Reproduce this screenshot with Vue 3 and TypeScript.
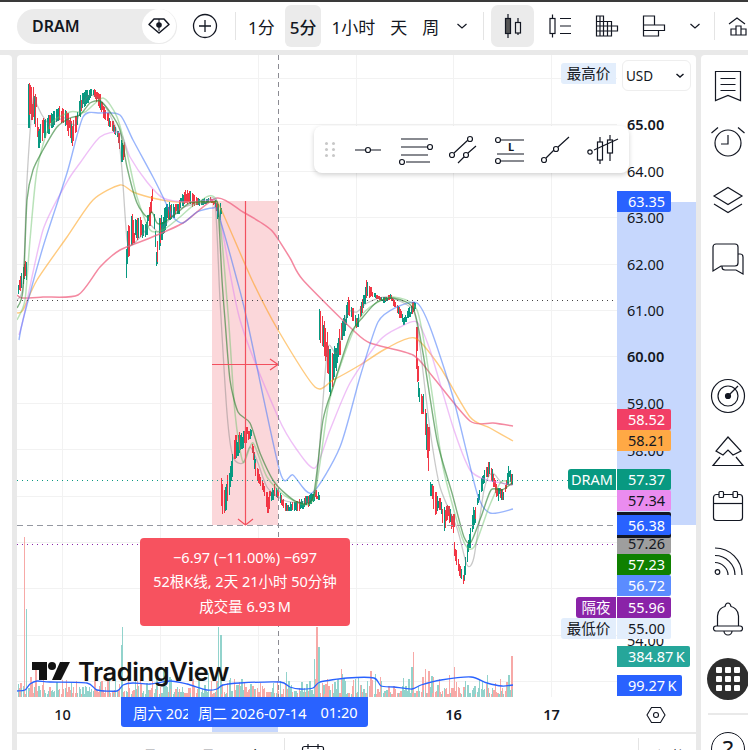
<script setup lang="ts">
type Pt = [number, number]

// page coordinates, read off the reference: [x, high, low]
const envelope: [number, number, number][] = [
  [17, 285, 300], [20, 275, 292], [23, 263, 287], [25, 258, 280], [26, 73, 133], [30, 85, 125], [32, 82, 123], [35, 93, 128],
  [38, 127, 148], [43, 118, 140], [50, 113, 132], [58, 105, 123], [65, 108, 128], [72, 120, 147], [77, 112, 128],
  [80, 95, 118], [85, 90, 105], [93, 88, 97], [98, 92, 108], [103, 103, 120], [110, 117, 130], [117, 130, 138],
  [121, 140, 162], [124, 243, 287], [125, 270, 297], [127, 227, 267], [132, 213, 247], [140, 217, 237], [145, 223, 240],
  [150, 200, 225], [152, 188, 203], [155, 225, 250], [156, 247, 273], [159, 217, 253], [167, 200, 223], [177, 203, 217],
  [185, 188, 203], [192, 192, 208], [197, 198, 207], [210, 197, 203], [215, 200, 208], [217, 203, 222],
  [220, 458, 497], [223, 493, 527], [227, 470, 505], [230, 463, 490], [235, 433, 460], [243, 427, 450], [250, 427, 440],
  [255, 460, 477], [263, 483, 493], [267, 493, 513], [275, 483, 497], [285, 503, 512], [297, 500, 512], [310, 493, 507],
  [315, 490, 500], [318, 296, 340], [323, 317, 350], [328, 335, 385], [330, 353, 400], [335, 343, 377], [340, 323, 350],
  [348, 297, 317], [357, 317, 330], [363, 293, 313], [366, 280, 300], [373, 292, 297], [382, 297, 303], [390, 293, 300],
  [400, 307, 320], [403, 317, 327], [408, 308, 318], [414, 298, 312], [416, 327, 370], [418, 380, 397], [420, 393, 415],
  [423, 393, 413], [428, 427, 477], [430, 480, 497], [435, 490, 517], [440, 497, 510], [443, 507, 535], [448, 500, 520],
  [453, 513, 540], [454, 540, 557], [457, 557, 570], [460, 563, 580], [463, 572, 588], [465, 553, 573], [469, 533, 553],
  [473, 507, 533], [477, 497, 507], [481, 477, 493], [486, 463, 480], [490, 460, 477], [496, 483, 500], [499, 487, 503],
  [504, 490, 500], [508, 465, 480], [511, 468, 488], [513, 477, 485]
]

const spikes: Record<number, number> = {
  24: 160, 26: 88, 27: 60, 122: 70, 121: 52, 218: 70, 220: 62, 223: 42, 316: 70, 318: 50, 314: 38, 415: 59, 413: 45, 411: 30,
  511: 41, 454: 30, 425: 28, 428: 26, 449: 22, 341: 28, 345: 20, 256: 20, 35: 28, 32: 22
}

let seed = 4711
const rnd = () => {
  seed = (seed * 16807) % 2147483647
  return seed / 2147483647
}

function envAt(x: number): [number, number] {
  for (let i = 1; i < envelope.length; i++) {
    const a = envelope[i - 1]
    const b = envelope[i]
    if (x <= b[0]) {
      // a session gap: hold the level, no long candle across it
      if (Math.abs(b[1] - a[1]) > 60) return [a[1], a[2]]
      const t = (x - a[0]) / (b[0] - a[0])
      return [a[1] + (b[1] - a[1]) * t, a[2] + (b[2] - a[2]) * t]
    }
  }
  const last = envelope[envelope.length - 1]
  return [last[1], last[2]]
}

const candles: { x: number; hi: number; lo: number; top: number; h: number; w: number; up: boolean; vol: number }[] = []
for (let i = 0; i < 390; i++) {
  const x = Math.round(17.5 + i * 1.272)
  const [hi, lo] = envAt(x)
  const span = lo - hi
  const bodyH = Math.max(2, span * (0.25 + rnd() * 0.35))
  const top = hi + rnd() * (span - bodyH)
  const vol = spikes[x] ?? (x < 24 ? 6 + rnd() * 10 : 3 + rnd() * rnd() * 26)
  const rising = envAt(x + 3)[0] < hi
  candles.push({
    x,
    hi: hi + rnd() * span * 0.3 * (top - hi > 0 ? 1 : 0),
    lo: lo - rnd() * span * 0.3,
    top,
    h: bodyH,
    w: rnd() > 0.6 ? 2 : 1,
    up: rnd() < (rising ? 0.72 : 0.3),
    vol
  })
}

function smooth(p: Pt[]): string {
  let d = `M${p[0][0]} ${p[0][1]}`
  for (let i = 0; i < p.length - 1; i++) {
    const p0 = p[Math.max(i - 1, 0)]
    const p1 = p[i]
    const p2 = p[i + 1]
    const p3 = p[Math.min(i + 2, p.length - 1)]
    const k = 8
    d += `C${(p1[0] + (p2[0] - p0[0]) / k).toFixed(1)} ${(p1[1] + (p2[1] - p0[1]) / k).toFixed(1)} ${(p2[0] - (p3[0] - p1[0]) / k).toFixed(1)} ${(p2[1] - (p3[1] - p1[1]) / k).toFixed(1)} ${p2[0]} ${p2[1]}`
  }
  return d
}

const maLines: { color: string; w: number; pts: Pt[] }[] = [
  { color: 'rgba(255,152,0,.5)', w: 1.4, pts: [[17,313],[23,310],[37,280],[67,237],[93,200],[120,185],[133,192],[157,199],[177,202],[213,202],[220,207],[252,280],[278,330],[315,387],[333,380],[360,365],[387,348],[415,338],[440,367],[470,417],[490,428],[513,441]] },
  { color: 'rgba(240,98,130,.75)', w: 1.5, pts: [[17,295],[22,298],[43,297],[78,295],[100,267],[120,250],[150,238],[183,223],[217,198],[243,212],[260,222],[273,232],[290,258],[303,280],[353,330],[370,343],[413,355],[433,377],[470,421],[493,423],[513,426]] },
  { color: 'rgba(224,130,240,.5)', w: 1.4, pts: [[19,335],[23,320],[43,230],[67,182],[80,163],[100,137],[120,133],[130,157],[147,182],[163,198],[187,202],[213,200],[218,207],[240,320],[278,417],[297,450],[315,468],[330,430],[350,383],[380,340],[400,327],[417,322],[430,350],[453,427],[470,470],[487,480],[513,485]] },
  { color: 'rgba(70,120,250,.55)', w: 1.4, pts: [[19,340],[23,320],[43,247],[67,173],[83,117],[100,113],[120,115],[133,140],[153,177],[163,197],[173,217],[183,223],[197,212],[213,208],[218,213],[237,280],[247,320],[280,472],[293,475],[312,493],[340,447],[360,377],[378,322],[397,307],[417,303],[430,327],[453,397],[477,493],[490,513],[513,509]] },
  { color: 'rgba(120,120,120,.4)', w: 1.3, pts: [[17,300],[23,285],[27,180],[33,100],[37,105],[42,115],[50,125],[55,122],[65,118],[75,125],[82,105],[90,95],[100,100],[110,115],[118,135],[122,170],[127,240],[132,245],[142,235],[150,225],[158,232],[165,225],[178,210],[190,205],[205,203],[215,203],[220,300],[227,413],[233,457],[243,463],[250,447],[258,463],[267,487],[283,500],[300,502],[315,493],[322,413],[328,347],[337,353],[347,313],[357,312],[367,303],[387,297],[413,310],[420,347],[430,430],[440,487],[457,528],[467,565],[474,557],[484,490],[492,473],[502,483],[512,485]] },
  { color: 'rgba(100,190,100,.45)', w: 1.5, pts: [[17,320],[25,300],[30,240],[37,170],[50,125],[70,112],[85,112],[103,98],[117,117],[127,153],[137,197],[150,230],[163,230],[180,217],[197,203],[217,202],[228,313],[235,413],[243,462],[253,443],[267,477],[287,497],[313,500],[328,407],[340,367],[357,323],[370,307],[393,297],[417,310],[430,380],[443,467],[463,540],[474,547],[489,507],[501,482],[512,482]] },
  { color: 'rgba(40,125,45,.6)', w: 1.4, pts: [[17,308],[23,290],[27,200],[33,170],[43,150],[57,127],[70,118],[80,115],[90,103],[100,101],[110,112],[120,130],[127,167],[137,203],[147,217],[152,212],[157,223],[163,223],[177,213],[190,203],[213,202],[218,207],[222,280],[225,320],[230,380],[238,412],[250,423],[260,453],[275,483],[297,502],[313,497],[323,420],[333,387],[350,335],[363,317],[377,302],[393,298],[413,308],[423,353],[437,440],[452,493],[464,537],[471,542],[481,517],[491,490],[502,490],[512,483]] }
]

const volMa: Pt[] = [[17,691],[25,690],[30,684],[37,681],[50,682],[87,683],[97,690],[117,691],[123,685],[133,683],[150,684],[170,681],[187,684],[207,690],[217,689],[223,685],[240,683],[280,682],[290,687],[300,689],[313,688],[320,682],[347,678],[374,678],[381,686],[394,687],[412,689],[421,685],[441,680],[471,677],[487,683],[502,686],[513,685]]

const gridY = Array.from({ length: 14 }, (_, i) => Math.round(78 + i * 46.4))
const gridX = [62.5, 160.5, 258.5, 356.5, 453.5, 551.5]

const ticks = [
  { y: 124, t: '65.00', bold: true }, { y: 171, t: '64.00' }, { y: 217, t: '63.00' }, { y: 264, t: '62.00' },
  { y: 310, t: '61.00' }, { y: 356, t: '60.00', bold: true }, { y: 403, t: '59.00' }, { y: 450, t: '58.00' },
  { y: 640, t: '54.00' }
]

const priceTags = [
  { top: 191, h: 21, t: '63.35', bg: '#2962ff', fg: '#fff', w: 54 },
  { top: 409, h: 21, t: '58.52', bg: '#f23f66', fg: '#fff', w: 54 },
  { top: 430, h: 21, t: '58.21', bg: '#ffa945', fg: '#131722', w: 54 },
  { top: 469, h: 21, t: '57.37', bg: '#089981', fg: '#fff', w: 54 },
  { top: 490, h: 21, t: '57.34', bg: '#ea8cef', fg: '#131722', w: 54 },
  { top: 533, h: 21, t: '57.26', bg: '#9e9e9e', fg: '#131722', w: 54 },
  { top: 512, h: 26, t: '', bg: '#131722', fg: '#fff', w: 54 },
  { top: 515, h: 20, t: '56.38', bg: '#2962ff', fg: '#fff', w: 54 },
  { top: 554, h: 21, t: '57.23', bg: '#0f8000', fg: '#fff', w: 54 },
  { top: 575, h: 21, t: '56.72', bg: '#5b8cff', fg: '#fff', w: 54 },
  { top: 597, h: 21, t: '55.96', bg: '#8a23a8', fg: '#fff', w: 54 },
  { top: 618, h: 21, t: '55.00', bg: '#e3eefc', fg: '#131722', w: 54 },
  { top: 646, h: 21, t: '384.87\u2009K', bg: '#26a69a', fg: '#fff', w: 73 },
  { top: 675, h: 21, t: '99.27\u2009K', bg: '#2962ff', fg: '#fff', w: 65 }
]

const nameTags = [
  { top: 469, w: 48, t: 'DRAM', bg: '#089981', fg: '#fff' },
  { top: 597, w: 40, t: '隔夜', bg: '#8a23a8', fg: '#fff' },
  { top: 618, w: 55, t: '最低价', bg: '#e3eefc', fg: '#131722' },
  { top: 63, w: 55, t: '最高价', bg: '#e3eefc', fg: '#131722' }
]
</script>

<template>
  <div class="app">
    <div class="topline"></div>
    <header class="header">
      <div class="symbol">
        <span class="symbol-name">DRAM</span>
        <span class="symbol-gem">
          <svg width="24" height="20" viewBox="0 0 24 20" fill="none" stroke="#131722" stroke-width="1.5">
            <path d="M7 3h10l5 5.5L12 17 2 8.500z" stroke-linejoin="round" />
            <circle cx="12" cy="9" r="2.800" fill="#131722" stroke="none" />
            <path d="M12 3v12" stroke-width="1" />
          </svg>
        </span>
      </div>
      <svg class="plus" width="36" height="36" viewBox="0 0 36 36" fill="none" stroke="#131722" stroke-width="1.300">
        <circle cx="18" cy="18" r="11.500" />
        <path d="M18 12v12M12 18h12" />
      </svg>
      <span class="sep first"></span>
      <div class="intervals">
        <button class="itv">1分</button>
        <button class="itv on">5分</button>
        <button class="itv">1小时</button>
        <button class="itv">天</button>
        <button class="itv">周</button>
        <svg class="chev" width="26" height="20" viewBox="0 0 26 20" fill="none" stroke="#131722" stroke-width="1.200">
          <path d="M8.500 8l4.500 4 4.500-4" />
        </svg>
      </div>
      <span class="sep second"></span>
      <div class="styles">
        <span class="sty on">
          <svg width="28" height="28" viewBox="0 0 28 28" fill="none" stroke="#131722" stroke-width="1.200">
            <path d="M9 2v24M19 6v17" />
            <rect x="6.500" y="6.500" width="5" height="15" fill="#555" />
            <rect x="16.500" y="10.500" width="5" height="10.500" fill="#ebebeb" />
          </svg>
        </span>
        <span class="sty">
          <svg width="28" height="28" viewBox="0 0 28 28" fill="none" stroke="#131722" stroke-width="1.200">
            <path d="M6.500 2.500v23M14 6.500h11M14 14h11M14 21.500h11" />
            <rect x="4" y="6.500" width="5" height="15" fill="#fff" />
          </svg>
        </span>
        <span class="sty">
          <svg width="28" height="28" viewBox="0 0 28 28" fill="none" stroke="#131722" stroke-width="1.200">
            <path d="M3.500 4h7v5.500h8V14h6v5h-6v5h-15zM3.500 9.500h15M3.500 14h15M3.500 19h15M7 4v20M10.500 4v20M14.500 9.500V24M18.500 9.500V24" />
          </svg>
        </span>
        <span class="sty">
          <svg width="28" height="28" viewBox="0 0 28 28" fill="none" stroke="#131722" stroke-width="1.200">
            <path d="M3.500 4h11v9h10v5.500h-6V24h-15zM3.500 13h11M3.500 18.500h15" />
          </svg>
        </span>
        <svg class="chev style-chev" width="24" height="20" viewBox="0 0 24 20" fill="none" stroke="#131722" stroke-width="1.200">
          <path d="M7.500 8l4.500 4 4.500-4" />
        </svg>
      </div>
      <span class="sep third"></span>
      <svg class="cut-icon" width="28" height="28" viewBox="0 0 28 28" fill="none" stroke="#131722" stroke-width="1.200">
        <path d="M2 12l8-6 8 6M4 23v-6h5v6zM9 23v-9h5v9zM14 23v-6h5v6z" />
      </svg>
    </header>

    <div class="body">
      <div class="left-rail"></div>

      <main class="main">
        <div class="chart">
          <svg class="canvas" width="679" height="642" viewBox="17 55 679 642">
            <path v-for="y in gridY" :key="'gy' + y" :d="`M17 ${y + 0.5}H617`" stroke="#f2f2f2" />
            <path v-for="x in gridX" :key="'gx' + x" :d="`M${x} 55V697`" stroke="#f2f2f2" />

            <rect x="212" y="201" width="66" height="324" fill="#fbd7da" />
            <rect x="617" y="202" width="79" height="323" fill="#c6d7fd" />

            <g shape-rendering="crispEdges">
              <rect v-for="(c, i) in candles" :key="'v' + i" :x="c.x" :y="697 - c.vol" :width="c.w" :height="c.vol"
                :fill="c.up ? '#92d3cc' : '#f7a9a7'" />
            </g>
            <path :d="smooth(volMa)" fill="none" stroke="#2962ff" stroke-width="1.300" />

            <g shape-rendering="crispEdges">
              <g v-for="(c, i) in candles" :key="'c' + i" :fill="c.up ? '#089981' : '#f23645'">
                <rect :x="c.x" :y="c.hi" width="1" :height="c.lo - c.hi" />
                <rect :x="c.x" :y="c.top" :width="c.w" :height="c.h" />
              </g>
            </g>

            <path v-for="(m, i) in maLines" :key="'ma' + i" :d="smooth(m.pts)" fill="none" :stroke="m.color" :stroke-width="m.w" />

            <path d="M17 300.500H617" stroke="#444" stroke-dasharray="1 4" />
            <path d="M17 480.500H568" stroke="#089981" stroke-dasharray="1 4" />
            <path d="M17 544.500H617" stroke="#8a23a8" stroke-dasharray="1 4" />

            <g fill="none" stroke="#f2505e" stroke-width="1.200">
              <path d="M245.500 201V525M212 364.500H278M270 359l8 5.500-8 5.500M238 519l7.500 6 7.500-6" />
            </g>

            <path d="M17 525.500H617" stroke="#9598a1" stroke-dasharray="6 4" />
            <path d="M278.500 55V697" stroke="#8b8b92" stroke-dasharray="5 4" />
          </svg>

          <span v-for="t in ticks" :key="t.t" class="tick" :class="{ bold: t.bold }" :style="{ top: t.y - 65 + 'px' }">{{ t.t }}</span>

          <span v-for="p in priceTags" :key="p.top" class="price-tag"
            :style="{ top: p.top - 55 + 'px', height: p.h + 'px', lineHeight: p.h + 'px', width: p.w + 'px', background: p.bg, color: p.fg }">{{ p.t }}</span>

          <span v-for="n in nameTags" :key="n.t" class="name-tag"
            :style="{ top: n.top - 55 + 'px', width: n.w + 'px', background: n.bg, color: n.fg }">{{ n.t }}</span>

          <div class="currency">
            <span>USD</span>
            <svg width="10" height="8" viewBox="0 0 10 8" fill="none" stroke="#131722" stroke-width="1.500">
              <path d="M1.500 2l3.500 3 3.500-3" />
            </svg>
          </div>

          <div class="drawbar">
            <span class="grip"><i v-for="n in 6" :key="n"></i></span>
            <svg width="32" height="32" viewBox="0 0 32 32" fill="none" stroke="#131722" stroke-width="1.200">
              <path d="M3 16h10.500M18.500 16H29" />
              <circle cx="16" cy="16" r="2.500" />
            </svg>
            <svg width="36" height="32" viewBox="0 0 36 32" fill="none" stroke="#131722" stroke-width="1.200">
              <path d="M3 5h27M3 13h26M3 21h27M8 28h24" />
              <circle cx="32" cy="13" r="2.500" fill="#fff" />
              <circle cx="4" cy="28" r="2.500" fill="#fff" />
            </svg>
            <svg width="32" height="32" viewBox="0 0 32 32" fill="none" stroke="#131722" stroke-width="1.200">
              <path d="M6 19L20 6M10 29l6-6M20 19l8-7" />
              <circle cx="4" cy="21" r="2.500" fill="#fff" />
              <circle cx="22" cy="5" r="2.500" fill="#fff" />
              <circle cx="18" cy="21" r="2.500" fill="#fff" />
            </svg>
            <svg width="32" height="32" viewBox="0 0 32 32" fill="none" stroke="#131722" stroke-width="1.200">
              <path d="M6 6h24M3 20h27M6 27h24" />
              <circle cx="4" cy="6" r="2.500" fill="#fff" />
              <circle cx="4" cy="27" r="2.500" fill="#fff" />
              <text x="14" y="17" class="mini-l">L</text>
            </svg>
            <svg width="32" height="32" viewBox="0 0 32 32" fill="none" stroke="#131722" stroke-width="1.200">
              <path d="M6 24l8-8M18 13L29 3" />
              <circle cx="4" cy="26" r="2.500" fill="#fff" />
              <circle cx="16" cy="15" r="2.500" fill="#fff" />
            </svg>
            <svg width="34" height="32" viewBox="0 0 34 32" fill="none" stroke="#131722" stroke-width="1.200">
              <path d="M14 3v27M24 1v26" />
              <rect x="11.500" y="8" width="5" height="18" fill="#fff" />
              <rect x="21.500" y="6" width="5" height="13" fill="#fff" />
              <path d="M8 16L32 5" />
              <circle cx="4" cy="18" r="2.200" fill="#fff" />
            </svg>
          </div>

          <div class="measure">
            <div>−6.97 (−11.00%) −697</div>
            <div>52根K线, 2天 21小时 50分钟</div>
            <div>成交量 6.93&#8201;M</div>
          </div>

          <div class="watermark">
            <svg width="38" height="20" viewBox="0 0 38 20" fill="#131313">
              <path d="M15 1H0v8h7v10h8zM29 19h-9L28 1h10z" />
              <circle cx="20" cy="5" r="4" />
            </svg>
            <span>TradingView</span>
          </div>
        </div>

        <div class="timeaxis">
          <span class="day" style="left: 28.500px">10</span>
          <span class="day bold" style="left: 419.500px">16</span>
          <span class="day bold" style="left: 517.500px">17</span>
          <div class="cross-time">
            <span class="old">周六 202</span>
            <span class="date">周二 2026-07-14</span>
            <span class="hour">01:20</span>
          </div>
          <svg class="gear" width="22" height="22" viewBox="0 0 22 22" fill="none" stroke="#131722" stroke-width="1.100">
            <path d="M6.500 3.500h9L20 11l-4.500 7.500h-9L2 11z" />
            <circle cx="11" cy="11" r="2.500" />
          </svg>
        </div>

        <footer class="footer">
          <div class="ranges">
            <span>1日</span><span>5日</span><span>1月</span><span class="wide">3月</span><span class="wider">1年</span>
          </div>
          <span class="foot-sep sep-a"></span>
          <svg class="foot-cal" width="24" height="24" viewBox="0 0 24 24" fill="none" stroke="#131722" stroke-width="1.200">
            <rect x="1.500" y="3.500" width="21" height="18" rx="2" />
            <path d="M7 1v5M17 1v5" />
          </svg>
          <span class="clock">00:55:25 UTC+8&nbsp;&nbsp;57%</span>
          <span class="foot-sep sep-b"></span>
          <span class="adj">调整</span>
        </footer>
      </main>

      <aside class="side">
        <svg class="ic" viewBox="0 0 36 36" fill="none" stroke="#131722" stroke-width="1.200">
          <path d="M5.500 3.500h25v29L18 27.500 5.500 32.500zM10.500 10.500h15M10.500 16.500h15M10.500 22.500h15" />
        </svg>
        <svg class="ic" viewBox="0 0 36 36" fill="none" stroke="#131722" stroke-width="1.200">
          <circle cx="18" cy="18" r="13" />
          <path d="M18 10v9h-7M1.500 8L8 2.500M34.500 8L28 2.500" />
        </svg>
        <svg class="ic" viewBox="0 0 36 36" fill="none" stroke="#131722" stroke-width="1.200">
          <path d="M4 14L18 5.500 32 14 18 22.500zM4 22l14 8.500L32 22" />
        </svg>
        <svg class="ic chat" viewBox="0 0 36 36" fill="none" stroke="#131722" stroke-width="1.200">
          <path d="M6 3h19a3 3 0 0 1 3 3v16a3 3 0 0 1-3 3H11l-8 5V6a3 3 0 0 1 3-3z" />
          <path d="M28 13h2a3 3 0 0 1 3 3v17l-7-4H15a3 3 0 0 1-3-3v-1" />
        </svg>

        <svg class="ic low target" viewBox="0 0 36 36" fill="none" stroke="#131722" stroke-width="1.200">
          <circle cx="18" cy="18" r="16.500" />
          <circle cx="18" cy="18" r="10" />
          <circle cx="18" cy="18" r="2.500" fill="#131722" />
          <path d="M18 18L28 8" />
        </svg>
        <svg class="ic low" viewBox="0 0 36 36" fill="none" stroke="#131722" stroke-width="1.200">
          <path d="M18 4l13 14-8 4-5-5-5 5-7-4zM10 24L3 32.500h30L26 24" />
        </svg>
        <svg class="ic low" viewBox="0 0 36 36" fill="none" stroke="#131722" stroke-width="1.200">
          <rect x="3.500" y="6.500" width="29" height="26" rx="3" />
          <path d="M3.500 15.500h29" />
          <rect x="9" y="3.500" width="4.500" height="6" rx="1" fill="#fff" />
          <rect x="23" y="3.500" width="4.500" height="6" rx="1" fill="#fff" />
        </svg>
        <svg class="ic low rss" viewBox="0 0 36 36" fill="none" stroke="#131722" stroke-width="1.200">
          <path d="M5 5c15 0 27 12 27 27M5 12.500c11 0 20 9 20 19.500M5 19.500c7 0 13 6 13 12.500" />
          <circle cx="7.500" cy="29" r="2.300" />
        </svg>
        <svg class="ic low bell" viewBox="0 0 36 36" fill="none" stroke="#131722" stroke-width="1.200">
          <path d="M7.500 25V15c0-6 5-9 7.500-9.500C15.500 3 17 2 18 2s2.500 1 3 3.500C23.500 6 28.500 9 28.500 15v10" />
          <rect x="3.500" y="25" width="29" height="5" rx="2.500" />
          <path d="M14 30a4 4 0 0 0 8 0" />
        </svg>

        <div class="apps">
          <i v-for="n in 9" :key="n"></i>
        </div>
        <span class="side-sep"></span>
        <div class="help">?</div>
      </aside>
    </div>
  </div>
</template>

<style scoped>
.app {
  width: 748px;
  height: 750px;
  overflow: hidden;
  background: #e9e9e9;
  font-family: "Noto Sans", "Noto Sans CJK SC", sans-serif;
  color: #131722;
}

.topline {
  height: 2px;
  background: #3a3a3a;
}

.header {
  display: flex;
  align-items: center;
  height: 48px;
  background: #fff;
  padding-left: 17px;
  overflow: hidden;
}

.symbol {
  flex: none;
  display: flex;
  align-items: center;
  justify-content: space-between;
  width: 160px;
  height: 35px;
  box-sizing: border-box;
  padding-left: 15px;
  border-radius: 18px;
  background: #ebebeb;
}

.symbol-name {
  font-size: 16px;
  font-weight: 600;
}

.symbol-gem {
  display: flex;
  align-items: center;
  justify-content: center;
  width: 34px;
  height: 34px;
  margin-right: 1px;
  border-radius: 50%;
  background: #fff;
}

.plus {
  flex: none;
  margin-left: 10px;
}

.sep {
  flex: none;
  width: 1px;
  height: 28px;
  background: #e4e4e4;
}

.sep.first {
  margin: 0 7px 0 12px;
}

.sep.second {
  margin: 0 7px 0 8px;
}

.sep.third {
  margin: 0 5px 0 7px;
}

.intervals,
.styles {
  flex: none;
  display: flex;
  align-items: center;
}

.intervals {
  gap: 5px;
}

.styles {
  gap: 4px;
}

.style-chev {
  margin-left: 4px;
}

.itv {
  height: 42px;
  padding: 0 5px;
  border: 0;
  border-radius: 6px;
  background: none;
  font: inherit;
  font-size: 17px;
  color: inherit;
}

.itv.on {
  background: #ebebeb;
  font-weight: 500;
}

.sty {
  display: flex;
  align-items: center;
  justify-content: center;
  width: 43px;
  height: 42px;
  border-radius: 7px;
}

.sty.on {
  background: #ebebeb;
}

.cut-icon {
  flex: none;
  margin-left: 7px;
}

.body {
  display: flex;
  gap: 5px;
  margin-top: 5px;
}

.left-rail {
  flex: none;
  width: 12px;
  height: 695px;
  border-radius: 0 4px 0 0;
  background: #fff;
}

.main {
  flex: none;
  width: 679px;
  height: 695px;
  border-radius: 4px 4px 0 0;
  background: #fff;
  overflow: hidden;
}

.chart {
  position: relative;
  height: 642px;
}

.canvas {
  position: absolute;
  left: 0;
  top: 0;
  display: block;
}

.mini-l {
  font-family: "Noto Sans", sans-serif;
  font-size: 11px;
  font-weight: 700;
  fill: #131722;
  stroke: none;
}

.tick {
  position: absolute;
  left: 610px;
  height: 20px;
  font-size: 14.500px;
  line-height: 20px;
}

.tick.bold {
  font-weight: 600;
}

.price-tag {
  position: absolute;
  left: 600px;
  box-sizing: border-box;
  padding-left: 11px;
  border-radius: 0 2px 2px 0;
  font-size: 14.500px;
  white-space: nowrap;
}

.name-tag {
  position: absolute;
  left: 544px;
  right: auto;
  height: 21px;
  transform: translateX(calc(55px - 100%));
  box-sizing: border-box;
  border-radius: 3px 0 0 3px;
  font-size: 14.500px;
  line-height: 21px;
  text-align: center;
  white-space: nowrap;
}

.currency {
  position: absolute;
  left: 605px;
  top: 5px;
  display: flex;
  align-items: center;
  justify-content: space-between;
  width: 69px;
  height: 31px;
  box-sizing: border-box;
  padding: 0 5px 0 3px;
  border: 1px solid #eeeeee;
  border-radius: 6px;
  background: #fff;
  font-size: 13.500px;
}

.drawbar {
  position: absolute;
  left: 297px;
  top: 71px;
  display: flex;
  align-items: center;
  width: 315px;
  height: 47px;
  box-sizing: border-box;
  padding-left: 11px;
  gap: 14px;
  border-radius: 8px;
  background: #fff;
  box-shadow: 0 2px 5px rgba(0, 0, 0, 0.18);
}

.grip {
  display: grid;
  grid-template-columns: 4px 4px;
  gap: 3px 3px;
  width: 11px;
  margin-right: 2px;
}

.grip i {
  width: 3px;
  height: 3px;
  border-radius: 50%;
  background: #c8c8c8;
}

.measure {
  position: absolute;
  left: 123px;
  top: 483px;
  display: flex;
  flex-direction: column;
  justify-content: center;
  gap: 3px;
  width: 210px;
  height: 88px;
  border-radius: 4px;
  background: #f7525f;
  color: #fff;
  font-size: 14.500px;
  line-height: 21.500px;
  text-align: center;
}

.watermark {
  position: absolute;
  left: 15px;
  top: 600px;
  display: flex;
  align-items: center;
  gap: 8px;
  height: 32px;
  color: #131313;
}

.watermark span {
  font-family: Inter, sans-serif;
  font-size: 25.500px;
  font-weight: 600;
  letter-spacing: -0.4px;
}

.timeaxis {
  position: relative;
  height: 35px;
  border-bottom: 2px solid #e9e9e9;
  box-sizing: content-box;
}

.timeaxis::before {
  content: "";
  position: absolute;
  left: 195px;
  bottom: 0;
  width: 66px;
  height: 5px;
  background: #c6d7fd;
}

.day {
  position: absolute;
  top: 6px;
  width: 34px;
  font-size: 14.500px;
  font-weight: 500;
  line-height: 22px;
  text-align: center;
}

.day.bold {
  font-weight: 600;
}

.cross-time {
  position: absolute;
  left: 104px;
  top: 0;
  display: flex;
  align-items: center;
  width: 247px;
  height: 30px;
  border-radius: 0 0 3px 3px;
  background: #2962ff;
  color: #fff;
  font-size: 14.500px;
  white-space: nowrap;
}

.cross-time .old {
  flex: none;
  width: 55px;
  margin-left: 12px;
  overflow: hidden;
}

.cross-time .date {
  margin-left: 10px;
}

.cross-time .hour {
  margin-left: 14px;
}

.gear {
  position: absolute;
  left: 628px;
  top: 7px;
}

.footer {
  position: relative;
  display: flex;
  align-items: flex-start;
  height: 18px;
  overflow: hidden;
  font-size: 14px;
}

.ranges {
  display: flex;
  position: absolute;
  left: 28px;
  top: 12px;
  gap: 23px;
  font-weight: 500;
  line-height: 20px;
}

.ranges .wide {
  margin-left: 13px;
}

.ranges .wider {
  margin-left: 5px;
}

.foot-sep {
  position: absolute;
  top: 4px;
  width: 1px;
  height: 22px;
  background: #e4e4e4;
}

.sep-a {
  left: 267px;
}

.sep-b {
  left: 621px;
}

.foot-cal {
  position: absolute;
  left: 284px;
  top: 9px;
}

.clock {
  position: absolute;
  left: 443px;
  top: 12px;
  line-height: 20px;
  white-space: nowrap;
}

.adj {
  position: absolute;
  left: 640px;
  top: 12px;
  line-height: 20px;
}

.side {
  flex: none;
  display: flex;
  flex-direction: column;
  align-items: center;
  width: 54px;
  height: 695px;
  padding-top: 2px;
  box-sizing: border-box;
  border-radius: 4px 0 0 0;
  background: #fff;
}

.ic {
  flex: none;
  width: 36px;
  height: 36px;
  margin: 10.500px 0;
}

.ic.chat {
  margin-top: 12.500px;
}

.ic.low {
  margin: 9.500px 0;
}

.ic.target {
  margin-top: 90.500px;
}

.ic.rss {
  margin-top: 10px;
}

.ic.bell {
  margin-top: 12.500px;
}

.apps {
  flex: none;
  display: grid;
  grid-template-columns: repeat(3, 6px);
  grid-auto-rows: 6px;
  gap: 3px;
  place-content: center;
  width: 42px;
  height: 42px;
  margin-top: 11px;
  border-radius: 50%;
  background: #2e2e2e;
}

.apps i {
  border-radius: 1px;
  background: #fff;
}

.side-sep {
  flex: none;
  width: 40px;
  height: 2px;
  margin-top: 13px;
  background: #e9e9e9;
}

.help {
  flex: none;
  width: 34px;
  height: 34px;
  margin-top: 17px;
  box-sizing: border-box;
  border: 1.300px solid #131722;
  border-radius: 50%;
  font-size: 24px;
  line-height: 32px;
  text-align: center;
}
</style>

<style>
html,
body {
  margin: 0;
  overflow: hidden;
  background: #fff;
}
</style>
